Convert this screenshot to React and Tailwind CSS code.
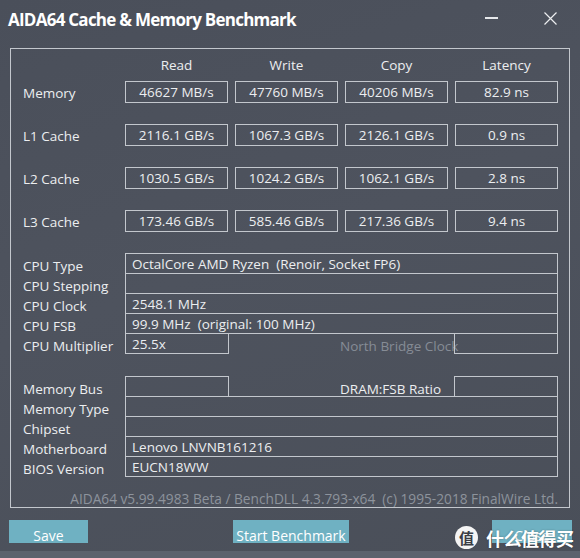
const benchRows = [
    { label: "Memory", values: ["46627 MB/s", "47760 MB/s", "40206 MB/s", "82.9 ns"] },
    { label: "L1 Cache", values: ["2116.1 GB/s", "1067.3 GB/s", "2126.1 GB/s", "0.9 ns"] },
    { label: "L2 Cache", values: ["1030.5 GB/s", "1024.2 GB/s", "1062.1 GB/s", "2.8 ns"] },
    { label: "L3 Cache", values: ["173.46 GB/s", "585.46 GB/s", "217.36 GB/s", "9.4 ns"] },
];

const headers = ["Read", "Write", "Copy", "Latency"];

const InfoRow = ({ label, value, first }) => (
    <div className={`flex items-center h-[21px] ${first ? "" : "-mt-px"}`}>
        <div className="w-[102px] shrink-0 leading-[20px] pt-[4px]">{label}</div>
        <div className="w-[433px] h-[21px] border border-[#c3c7cd] pl-[6px] pt-[2px] leading-[17px] whitespace-pre overflow-hidden">
            {value}
        </div>
    </div>
);

const App = () => {
    return (
        <div className="relative w-[580px] h-[558px] overflow-hidden bg-[linear-gradient(160deg,#4a4f5a_0%,#4e535e_45%,#4a4f59_100%)] text-[#eceef0] font-['Open_Sans',sans-serif] text-[13.5px]">
            {/* title bar */}
            <div className="flex h-[48px]">
                <div className="pl-[8px] pt-[8px] text-[17px] font-bold tracking-[-0.75px] leading-[24px] text-white">
                    AIDA64 Cache &amp; Memory Benchmark
                </div>
                <div className="ml-auto flex items-start pr-[23px]">
                    <div className="w-[13px] h-[1.5px] bg-[#e6e8eb] mt-[17px]"></div>
                    <svg width="13" height="13" viewBox="0 0 13 13" className="ml-[46px] mt-[12px]">
                        <path d="M0.5 0.5 L12.5 12.5 M12.5 0.5 L0.5 12.5" stroke="#eceef0" strokeWidth="1.2" fill="none" />
                    </svg>
                </div>
            </div>

            {/* group box */}
            <div className="ml-[10px] w-[560px] h-[460px] border border-[#c3c7cd] overflow-hidden pl-[12px]">
                <div className="grid grid-cols-[95px_103px_103px_103px_103px] gap-x-[7px] h-[32px] items-center pt-[1px]">
                    <div></div>
                    {headers.map((h) => (
                        <div key={h} className="text-center">{h}</div>
                    ))}
                </div>

                <div className="flex flex-col gap-[21px]">
                    {benchRows.map((row) => (
                        <div key={row.label} className="grid grid-cols-[95px_103px_103px_103px_103px] gap-x-[7px] h-[22px] items-center">
                            <div className="pt-[2px]">{row.label}</div>
                            {row.values.map((v, i) => (
                                <div key={i} className="h-[22px] border border-[#c3c7cd] text-center leading-[21px]">
                                    {v}
                                </div>
                            ))}
                        </div>
                    ))}
                </div>

                <div className="mt-[21px]">
                    <InfoRow first label="CPU Type" value="OctalCore AMD Ryzen  (Renoir, Socket FP6)" />
                    <InfoRow label="CPU Stepping" value="" />
                    <InfoRow label="CPU Clock" value="2548.1 MHz" />
                    <InfoRow label="CPU FSB" value="99.9 MHz  (original: 100 MHz)" />
                    <div className="flex items-center h-[21px] -mt-px">
                        <div className="w-[102px] shrink-0 leading-[20px] pt-[4px]">CPU Multiplier</div>
                        <div className="w-[104px] h-[21px] border border-[#c3c7cd] pl-[6px] pt-[2px] leading-[17px]">25.5x</div>
                        <div className="ml-[111px] w-[114px] leading-[20px] pt-[4px] text-[#868c96] whitespace-nowrap">North Bridge Clock</div>
                        <div className="w-[104px] h-[21px] border border-[#c3c7cd]"></div>
                    </div>
                </div>

                <div className="mt-[22px]">
                    <div className="flex items-center h-[21px]">
                        <div className="w-[102px] shrink-0 leading-[20px] pt-[4px]">Memory Bus</div>
                        <div className="w-[104px] h-[21px] border border-[#c3c7cd]"></div>
                        <div className="ml-[111px] w-[114px] leading-[20px] pt-[4px] whitespace-nowrap">DRAM:FSB Ratio</div>
                        <div className="w-[104px] h-[21px] border border-[#c3c7cd]"></div>
                    </div>
                    <InfoRow label="Memory Type" value="" />
                    <InfoRow label="Chipset" value="" />
                    <InfoRow label="Motherboard" value="Lenovo LNVNB161216" />
                    <InfoRow label="BIOS Version" value="EUCN18WW" />
                </div>

                <div className="mt-[13px] pr-[11px] text-right text-[13.7px] leading-[18px] text-[#8d939c] whitespace-pre">
                    AIDA64 v5.99.4983 Beta / BenchDLL 4.3.793-x64  (c) 1995-2018 FinalWire Ltd.
                </div>
            </div>

            {/* buttons */}
            <div className="flex mt-[12px] h-[23px] text-[14px] text-white">
                <div className="ml-[9px] w-[79px] h-[23px] bg-[#6fb1c2] overflow-hidden text-center pt-[7px] leading-[18px]">Save</div>
                <div className="ml-[145px] w-[116px] h-[23px] bg-[#6fb1c2] overflow-hidden text-center pt-[7px] leading-[18px]">Start Benchmark</div>
                <div className="ml-[143px] w-[80px] h-[23px] bg-[#6fb1c2] overflow-hidden text-center pt-[7px] leading-[18px]">Close</div>
            </div>

            <div className="mt-[8px] h-[7px] bg-[#5c626d]"></div>

            {/* watermark */}
            <div className="absolute left-[455px] top-[526px] flex items-center gap-[8px]">
                <div className="w-[23px] h-[23px] rounded-full bg-[#f4f4f4] flex items-center justify-center text-[15px] font-bold text-[#3a3d44] leading-none font-['Noto_Sans_CJK_SC',sans-serif]">
                    值
                </div>
                <div className="text-[18px] font-bold leading-[22px] text-white tracking-[-0.5px] font-['Noto_Sans_CJK_SC',sans-serif] [text-shadow:0_0_2px_rgba(0,0,0,0.35)]">
                    什么值得买
                </div>
            </div>
        </div>
    );
};

export default App;
